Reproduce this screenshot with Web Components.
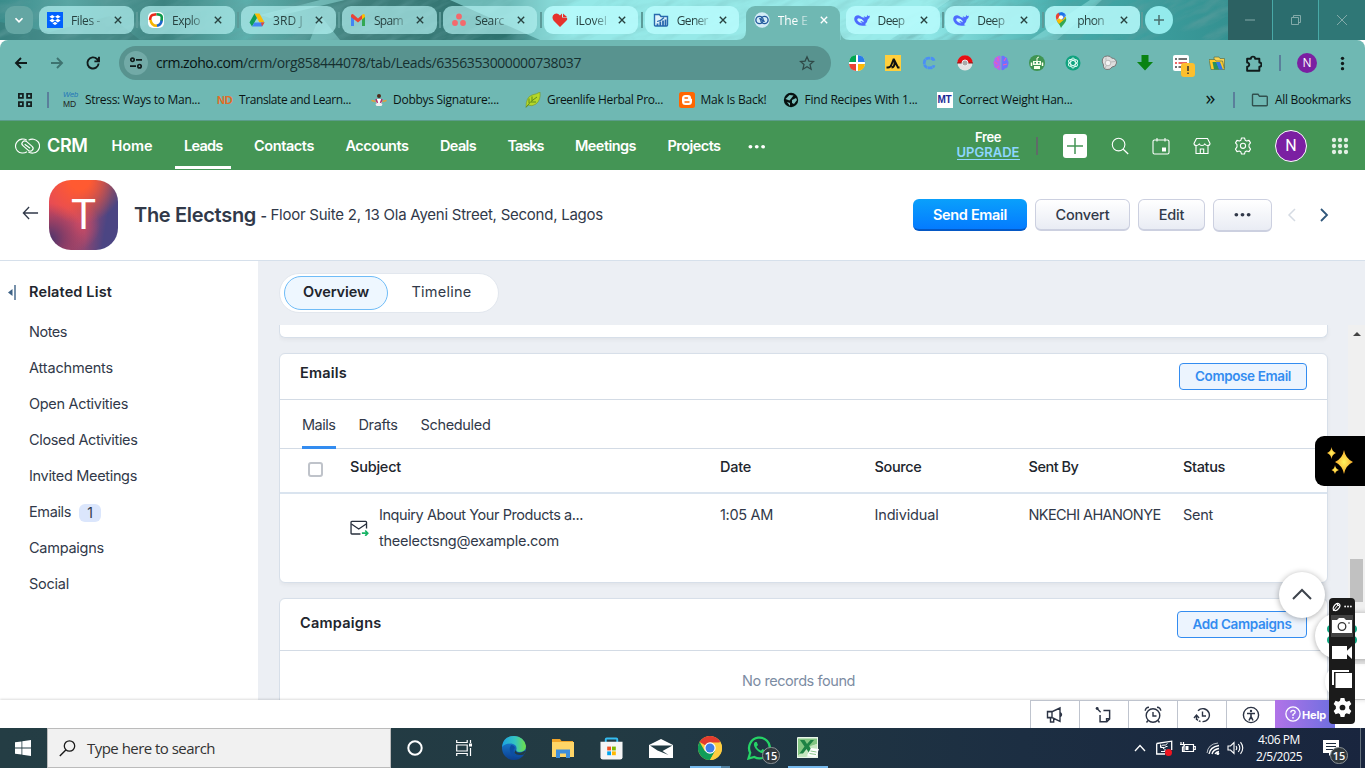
<!DOCTYPE html>
<html lang="en">
<head>
<meta charset="utf-8">
<title>The Electsng - Zoho CRM</title>
<style>
html,body{margin:0;height:768px;overflow:hidden}
body{width:1365px;font-family:Inter,Roboto,"Liberation Sans",sans-serif;font-size:14.5px;color:#313949;background:#fff}
</style>
</head>
<body>
<desktop-screen></desktop-screen>
<script>
const ICONS = {
  chev:['0 0 16 16','<path d="M4 6l4 4 4-4" fill="none" stroke="#fff" stroke-width="2"/>'],
  close:['0 0 10 10','<path d="M1 1l8 8M9 1l-8 8" stroke="currentColor" stroke-width="1.7"/>'],
  dropbox:['0 0 16 16','<path fill="#0061fe" d="M0 0h16v16H0z"/><path fill="#fff" d="M5.2 3L8 4.800 5.200 6.600 2.400 4.800zM10.800 3l2.800 1.800-2.800 1.800L8 4.800zM5.200 6.800L8 8.600l-2.800 1.800-2.800-1.800zM10.800 6.800l2.800 1.800-2.800 1.800L8 8.600zM8 9.800l2.500 1.700L8 13l-2.500-1.500z"/>'],
  explo:['0 0 16 16','<rect width="16" height="16" rx="5" fill="#fff"/><path d="M8.500 2.300L4.500 3Q2.500 3.500 2 8" fill="none" stroke="#e8291c" stroke-width="2.600"/><path d="M8.500 2.200q5 0 5.300 3L13.600 9" fill="none" stroke="#0d9a4b" stroke-width="2.600"/><path d="M13.700 8.500Q13 13.500 8.500 13.700" fill="none" stroke="#1c66c9" stroke-width="2.600"/><path d="M9 13.800Q3.500 14 2.500 8" fill="none" stroke="#f6b400" stroke-width="2.600"/>'],
  drive:['0 0 16 16','<path fill="#fbbc04" d="M5.500 1.500h5l5 9h-5z"/><path fill="#0f9d58" d="M5.500 1.500L8 6 3 14.500.500 10.500z"/><path fill="#4285f4" d="M5.500 10.500h10L13 14.500H3z"/><path fill="#ea4335" d="M12 10.500h3.500L13 14.500z"/>'],
  gmail:['0 0 16 16','<path fill="#4285f4" d="M1 3.500l3 2.500v8H1z"/><path fill="#34a853" d="M12 6l3-2.500V14h-3z"/><path fill="#ea4335" d="M1 3.500Q2 1 4 3l4 3.500L12 3v4L8 10.500 1 5z"/><path fill="#fbbc04" d="M12 3q2-2 3 .500V5l-3 2.500z"/>'],
  asana:['0 0 16 16','<g fill="#f4696c"><circle cx="8" cy="4.500" r="2.900"/><circle cx="4" cy="11" r="2.900"/><circle cx="12" cy="11" r="2.900"/></g>'],
  heart:['0 0 16 16','<path fill="#e5322d" d="M8 15L1.500 8.500Q-1 4 2.500 2q3-1.500 5.500 1.500L10 1.500v4h4.500Q16 7 14.500 8.500z"/><path fill="#e5322d" d="M11 1.500l4 3.500h-4z"/>'],
  bigin:['0 0 16 16','<path d="M1.500 13V2.500h5l1.500 2h6.500V13q0 1-1 1h-11q-1 0-1-1z" fill="#dff3fa" stroke="#2669ad" stroke-width="1.400"/><path d="M4.500 14v-2.500M7.300 14v-4.500M10 14V8.500M12.500 14V7.500" stroke="#2669ad" stroke-width="1.800"/><path d="M4 9.500Q8 9 11 5.500" fill="none" stroke="#2669ad" stroke-width="1.200"/>'],
  zcrm:['0 0 24 16','<g fill="none" stroke="currentColor" stroke-width="1.100"><path d="M11.500 13.800A7 7 0 1 1 11.300 2.200M13 2.100A7 7 0 1 1 12.700 13.900"/><rect x="5.800" y="5.300" width="12.400" height="5.400" rx="2.700" transform="rotate(42 12 8)"/><path d="M9.300 6.200l5.200 4"/></g>'],
  zoho:['0 0 24 24','<circle cx="12" cy="12" r="11.500" fill="#d3ecf7"/><g fill="none" stroke="#21599c" stroke-width="2"><circle cx="8.300" cy="12" r="5.500"/><circle cx="15.700" cy="12" r="5.500"/><path d="M8 9.500l8 5"/></g>'],
  deep:['0 0 16 16','<path fill="#4d6bfe" d="M.200 7Q.300 3.200 4.300 3.200q2 .3 3.700 2Q10 5.200 10.500 6.500L9.800 4q1.500 1.200 2.900.8.500-1.500 1-2l.3 1.200 2-.2q-.300 2.700-2.300 3.700Q13.500 10.500 11 12.300l1.500.9Q6 15 2.300 11.500.100 9.500.200 7z"/><path fill="#c7fbfc" d="M4.500 6.200Q2.800 6.600 3.300 8.300q1.500 2.700 5 3.200L6.300 8.900l2 .300L9 10.500l.8-1.200Q8 6.400 4.500 6.200z"/>'],
  maps:['0 0 16 16','<path fill="#34a853" d="M8 16Q7 13 4 9.500l8-5q3 3-1 7.500Q9 14 8 16z"/><path fill="#fbbc04" d="M3.500 8.500l7-6L13 6 6 12z"/><path fill="#4285f4" d="M8 .200Q12 .500 13 3.500L9.500 8 6 4z"/><path fill="#ea4335" d="M4 9Q1 3 5.500.800L8 3 3.500 8.500z"/><path fill="#1a73e8" d="M5.500.800Q9-1 12 2L8 6z"/><circle cx="8" cy="5.300" r="2.100" fill="#fff"/>'],
  plus:['0 0 12 12','<path d="M6 1v10M1 6h10" stroke="#4b706e" stroke-width="1.500"/>'],
  min:['0 0 10 10','<path d="M0 5h10" stroke="#83aaa9"/>'],
  restore:['0 0 10 10','<path d="M.500 2.500h7v7h-7zM2.500 2.500v-2h7v7h-2" fill="none" stroke="#83aaa9"/>'],
  wclose:['0 0 10 10','<path d="M0 0l10 10M10 0L0 10" stroke="#83aaa9"/>'],
  back:['0 0 16 16','<path d="M14 8H3M8 3L3 8l5 5" fill="none" stroke="currentColor" stroke-width="1.900"/>'],
  fwd:['0 0 16 16','<path d="M2 8h11M8 3l5 5-5 5" fill="none" stroke="currentColor" stroke-width="1.900"/>'],
  reload:['0 0 16 16','<path d="M13.600 8.500A5.600 5.600 0 1 1 12 4L14 6.200M14 1.800v4.600H9.400" fill="none" stroke="#101b1b" stroke-width="1.900"/>'],
  tune:['0 0 14 14','<g fill="none" stroke="#101b1b" stroke-width="1.700"><circle cx="3.500" cy="3.800" r="1.700"/><path d="M7 3.800h6M1 10.200h6"/><circle cx="10.500" cy="10.200" r="1.700"/></g>'],
  star:['0 0 16 16','<path d="M8 1.800l1.900 4.300 4.600.4-3.500 3.100 1.100 4.600L8 11.800l-4.100 2.400L5 9.600 1.500 6.500l4.600-.4z" fill="none" stroke="#2f4a48" stroke-width="1.300"/>'],
  ext1:['0 0 16 16','<circle cx="8" cy="8" r="8" fill="#fff"/><path fill="#00a651" d="M7 0v7H0A8 8 0 0 1 7 0z"/><path fill="#2b7de9" d="M9 0v7h7A8 8 0 0 0 9 0z"/><path fill="#ea4335" d="M7 16V9H0a8 8 0 0 0 7 7z"/><path fill="#fbb905" d="M9 16V9h7a8 8 0 0 1-7 7z"/>'],
  ext2:['0 0 16 16','<path fill="#ffcf3c" d="M0 0h16v16H0z"/><path d="M1.500 12.500h1.500q2.500 0 3.500-3l2-5h.5l4 8h1.500M6.500 12.500Q10 12 9.500 7" stroke="#111" stroke-width="1.900" fill="none"/>'],
  ext3:['0 0 16 16','<path d="M13 5.800Q12.500 3.200 9 3.200H7.500Q3.300 3.500 3.300 8t4.200 4.800H9q3.500 0 4-2.600" stroke="#4b8ff5" stroke-width="2.800" fill="none" stroke-dasharray="4.500 .5"/>'],
  ext4:['0 0 16 16','<circle cx="8" cy="8" r="7.500" fill="#e4e4e4"/><path d="M.300 8a7.700 7.700 0 0 1 15.400 0z" fill="#e60f13"/><path d="M0 8h16" stroke="#7a2222" stroke-width="1"/><circle cx="8" cy="8" r="3" fill="#aaa" stroke="#eee"/>'],
  ext5:['0 0 16 16','<path fill="#b366f0" d="M7.500 1Q5 0 4 2 1 2.500 1.500 5-.500 7.500 1 10q0 3 3 3.500 2 3 3.500 1z"/><path fill="#6c71ff" d="M8.500 1Q11 0 12 2q3 .500 2.500 3 2 2.500.500 5 0 3-3 3.500-2 3-3.500 1z"/><path d="M4 2q2 2 1 4M1.500 7l3 2M13 3l-2 3M14 9l-4 1M4 13l2-2" stroke="#ff5aa5" fill="none"/>'],
  ext6:['0 0 16 16','<circle cx="8" cy="8" r="8" fill="#3f9452"/><path d="M4 6h8v4H4zM5 11h6v3H5z" fill="#f6ffe9"/><path d="M8 6V3l2-1" stroke="#f6ffe9" fill="none"/><path d="M5.500 7h1.500v1.500H5.500zM9 7h1.500v1.500H9z" fill="#285"/><path d="M2.500 7.500v3.500M13.500 7.500v3.500" stroke="#ffe" stroke-width="1.500"/>'],
  ext7:['0 0 16 16','<circle cx="8" cy="8" r="7.500" fill="#10a37f"/><g fill="none" stroke="#e8fff8" stroke-width=".9"><ellipse cx="8" cy="8" rx="2.400" ry="5"/><ellipse cx="8" cy="8" rx="2.400" ry="5" transform="rotate(60 8 8)"/><ellipse cx="8" cy="8" rx="2.400" ry="5" transform="rotate(120 8 8)"/></g>'],
  ext8:['0 0 16 16','<path d="M1.500 4q1.500-3.500 5-3 3-.3 4 2 5 .5 5 5-.500 4-4.500 4-1.500 3-5 2.500-4-.500-3.500-4.500-2-3-1-6z" fill="#dedede" stroke="#777"/><circle cx="7" cy="8" r="2.800" fill="#f4f4f4" stroke="#bbb"/><path d="M5 2.500v3M4 13l1.500-2.500M10 7l4-.5" stroke="#bbb"/>'],
  ext9:['0 0 16 16','<path d="M4.500 0h7v7H16l-8 8.500L0 7h4.500z" fill="#098312"/>'],
  ext10:['0 0 22 22','<rect width="16" height="16" rx="2" fill="#fff"/><path d="M2 4h2M5.500 4H14M2 12h2M5.500 12H14" stroke="#444" stroke-width="1.700"/><path d="M2 8h2M5.500 8H14" stroke="#e53935" stroke-width="1.700"/><rect x="8" y="8" width="14" height="14" rx="3" fill="#fdbf2d"/><path d="M15 11v5M15 17.500v1.600" stroke="#333" stroke-width="1.500"/>'],
  ext11:['0 0 16 16','<path d="M5 2h5l1 1.500h4.500V13H5z" fill="#fbd24e" stroke="#57704d" stroke-width=".7"/><path d="M0 4.500h6l1 1.500h6.500l2 8.500H2z" fill="#ffca28" stroke="#57704d" stroke-width=".7"/><path d="M3.500 7h4l3 7.500H5z" fill="#28915b"/><path d="M7 7h4l3 7.500h-4z" fill="#3178e5"/>'],
  puzzle:['0 0 16 16','<path d="M2 3.500h3.500a2 2 0 0 1 4 0h4V7a2 2 0 0 1 0 4v3.800H2V11a2 2 0 0 0 0-4z" fill="none" stroke="#101b1b" stroke-width="1.800" stroke-linejoin="round"/>'],
  vdots:['0 0 16 16','<g fill="#101b1b"><circle cx="8" cy="2.500" r="1.800"/><circle cx="8" cy="8" r="1.800"/><circle cx="8" cy="13.500" r="1.800"/></g>'],
  apps:['0 0 16 16','<path d="M1.900 1.900h4v4h-4zM10.100 1.900h4v4h-4zM1.900 10.100h4v4h-4zM10.100 10.100h4v4h-4z" fill="none" stroke="#152020" stroke-width="1.800"/>'],
  dobby:['0 0 16 16','<path d="M.500 8.500l4 1M15.500 8.500l-4 1" stroke="#e0a13c" stroke-width="1.700"/><circle cx="8" cy="4" r="2" fill="#4e2a1a"/><path d="M6 7h4l1 4H5z" fill="#fff"/><path d="M5 7l1.500 4M11 7l-1.500 4" stroke="#b32b6f" stroke-width="1.500"/><path d="M4.500 12q3.500-3 7 0l-1 2H5.500z" fill="#eee"/>'],
  leaf:['0 0 16 16','<path d="M1 15Q1 5 7 3q5-1 8-3 1 8-4 12-4 3-8 1z" fill="#b5d829" stroke="#75942a" stroke-width=".6"/><path d="M1 15.500Q5 9 12 5M4 11V6.500M7 8.500V4.500M6 10h5" fill="none" stroke="#5f8c1a"/>'],
  blogger:['0 0 16 16','<rect width="16" height="16" rx="2.500" fill="#ff6600"/><path d="M6.500 3h2.500q3 0 3 3 0 1 1 1v2.500q0 3.500-3.500 3.500h-3Q3 13 3 9.500v-3Q3 3 6.500 3z" fill="#fff"/><path d="M6 6h2.500M6 10h4" stroke="#ff6600" stroke-width="1.400" stroke-linecap="round"/>'],
  globe:['0 0 16 16','<circle cx="8" cy="8" r="7.200" fill="#06100f"/><path d="M2.500 7l4-4 4 .500-2 2.500-2 2.500zM9 8l4-2 1 2-3 4-2-1zM4 10l3 1v3z" fill="#79bdb9"/>'],
  folder:['0 0 18 16','<path d="M1.500 13V3q0-.7.7-.7H7l1.500 2h7q.8 0 .8.800V13q0 .7-.8.700H2.200q-.7 0-.7-.7z" fill="none" stroke="#31514f" stroke-width="1.400"/>'],
  search:['0 0 18 18','<circle cx="7.600" cy="7.600" r="6.300" fill="none" stroke="#fff" stroke-width="1.100"/><path d="M12.200 12.200l5 4.800" stroke="#fff" stroke-width="1.200"/>'],
  cal:['0 0 18 18','<rect x="1" y="3" width="16" height="14" rx="1.500" fill="none" stroke="#fff" stroke-width="1.100"/><path d="M5 1v3.500M13 1v3.500" stroke="#fff" stroke-width="1.100"/><path d="M10 10.500h4v4h-4z" fill="#fff"/>'],
  store:['0 0 18 18','<path d="M3.500 1.500h11l2.500 5q0 2-2.500 2-1.800 0-2.700-1.500Q11 8.500 9 8.500T6.200 7Q5 8.500 3.500 8.500 1 8.500 1 6.500zM3 8.500v8h12v-8M7.300 16.500V12h3.400v4.500" fill="none" stroke="#fff" stroke-width="1.100"/>'],
  gear:['0 0 18 18','<path d="M7.500 1h3l.7 2.200 1.500.8 2.300-.6 1.500 2.500L15 7.600v2.300l1.500 2.200-1.500 2.500-2.400-.6-1.500.8-.6 2.200h-3l-.7-2.200-1.500-.8-2.300.6-1.500-2.500L3 9.900V7.600L1.500 5.900 3 3.400l2.400.6 1.500-.8z" fill="none" stroke="#fff" stroke-width="1.100" stroke-linejoin="round"/><circle cx="9" cy="8.800" r="2.600" fill="none" stroke="#fff" stroke-width="1.100"/>'],
  grid9:['0 0 18 18','<g fill="#e2efe4">'+[2.500,8.500,14.500].map(y=>[2.500,8.500,14.500].map(x=>`<circle cx="${x+.5}" cy="${y+.5}" r="2.150"/>`).join('')).join('')+'</g>'],
  bigplus:['0 0 24 24','<rect width="24" height="24" rx="3" fill="#fff"/><path d="M12 4v16M4 12h16" stroke="#449555" stroke-width="1.500"/>'],
  longback:['0 0 18 14','<path d="M17 7H1.500M7.500 1L1.500 7l6 6" fill="none" stroke="#313949" stroke-width="1.400"/>'],
  dots:['0 0 18 6','<g fill="currentColor"><circle cx="2.500" cy="3" r="2"/><circle cx="9" cy="3" r="2"/><circle cx="15.500" cy="3" r="2"/></g>'],
  left:['0 0 10 14','<path d="M8 1L2 7l6 6" fill="none" stroke="#d5dbe3" stroke-width="1.500"/>'],
  right:['0 0 10 14','<path d="M2 1l6 6-6 6" fill="none" stroke="#2f567a" stroke-width="1.800"/>'],
  collapse:['0 0 8 15','<path d="M0 7.500L4.500 4v7z" fill="#3d6286"/><path d="M7 0v15" stroke="#3d6286" stroke-width="1.400"/>'],
  mail:['0 0 20 16','<path d="M11 14H2q-.9 0-.9-.9V2.300q0-.9.900-.9h14.500q.9 0 .9.900v6.200" fill="none" stroke="#272f3d" stroke-width="1.400"/><path d="M1.500 4l7.700 5L17 4" fill="none" stroke="#272f3d" stroke-width="1.400"/><path d="M12.500 13.200h6M16 10.500l2.700 2.700-2.700 2.700" fill="none" stroke="#16b364" stroke-width="1.700"/>'],
  spark:['0 0 26 27','<defs><radialGradient id="g"><stop offset="0" stop-color="#fff45e"/><stop offset="1" stop-color="#f7a928"/></radialGradient></defs><g fill="url(#g)"><path d="M17 3q1.500 8.500 9 12-7.500 3.500-9 12-1.500-8.500-9-12 7.500-3.500 9-12z"/><path d="M4.500 0Q5 4.500 9 6 5 7.500 4.500 12 4 7.500 0 6 4 4.500 4.500 0z"/><path d="M8 18q.500 4 4 5-3.500 1-4 4-.500-3-3.500-4Q7.500 22 8 18z"/></g>'],
  up:['0 0 20 12','<path d="M1 11l9-9 9 9" fill="none" stroke="#3d434c" stroke-width="2"/>'],
  horn:['0 0 18 16','<path d="M1.500 5H6l8-3.300v12L6 10.300H1.500zM6 5v5.300M4.500 10.500v3.700h3.200V11M14.200 6q2.600 1.700 0 3.500" fill="none" stroke="#2b3344" stroke-width="1.400"/>'],
  note:['0 0 16 16','<path d="M7.500 4H13v7.500L10.500 14H4.500V8M13 11.300h-2.700V14" fill="none" stroke="#2b3344" stroke-width="1.300"/><path d="M2 2.500l3 3" fill="none" stroke="#2b3344" stroke-width="1.200"/><circle cx="1.900" cy="2.200" r="1.300" fill="#2b3344"/>'],
  alarm:['0 0 18 18','<circle cx="9" cy="9.500" r="6.800" fill="none" stroke="#2b3344" stroke-width="1.400"/><path d="M9 6v4h3.500M1.200 4.800Q1.500 1.500 5 1.300M16.800 4.800Q16.500 1.500 13 1.300M4 14.500L2.500 16.500M14 14.500l1.500 2" fill="none" stroke="#2b3344" stroke-width="1.400"/>'],
  hist:['0 0 18 18','<path d="M5 4.800A6.500 6.500 0 1 1 9.500 15.600M9.500 5.500V10H13M3.500 14V9.500M1 12l2.500-3L6 12" fill="none" stroke="#2b3344" stroke-width="1.400"/><path d="M3.500 13q1.500 2 4 2.500" fill="none" stroke="#2b3344" stroke-width="1.400" stroke-dasharray="2 1"/>'],
  access:['0 0 18 18','<circle cx="9" cy="9" r="7.600" fill="none" stroke="#2b3344" stroke-width="1.400"/><circle cx="9" cy="5" r="1.200" fill="#2b3344"/><path d="M5 7.500h8M9 7.500v3l-2 4M9 10.500l2 4" stroke="#2b3344" stroke-width="1.600" fill="none"/>'],
  help:['0 0 16 16','<circle cx="8" cy="8" r="7.100" fill="none" stroke="#fff" stroke-width="1.300"/><path d="M5.800 6.500Q5.800 4.300 8 4.300t2.200 2Q10.200 7.500 8 8.500V10" fill="none" stroke="#fff" stroke-width="1.300"/><circle cx="8" cy="11.800" r=".9" fill="#fff"/>'],
  win:['0 0 16 16','<path fill="#fff" d="M0 2.300L6.500 1.400v6.200H0zM7.300 1.300L16 0v7.600H7.300zM0 8.400h6.500v6.200L0 13.700zM7.300 8.400H16V16l-8.700-1.200z"/>'],
  tsearch:['0 0 17 17','<circle cx="10.500" cy="6" r="5.200" fill="none" stroke="#1a1a1a" stroke-width="1.300"/><path d="M6.800 10L.800 16" stroke="#1a1a1a" stroke-width="1.400"/>'],
  cortana:['0 0 16 16','<circle cx="8" cy="8" r="6.700" fill="none" stroke="#fff" stroke-width="2"/>'],
  taskv:['0 0 16 16','<path d="M.700 0v2.500h10.500V0M.700 16v-2.500h10.500V16M.700 5h10.500v6H.700z" fill="none" stroke="#fff" stroke-width="1.200"/><path d="M14.500 0v3M14.500 8v8" stroke="#fff" stroke-width="1.200"/><path d="M13 3.500h3v3h-3z" fill="#fff"/>'],
  edge:['0 0 24 24','<defs><linearGradient id="e1"><stop offset="0" stop-color="#1ba2e2"/><stop offset=".55" stop-color="#35c5c0"/><stop offset="1" stop-color="#70e044"/></linearGradient><linearGradient id="e2" x2="0" y2="1"><stop offset="0" stop-color="#1b8be0"/><stop offset="1" stop-color="#0c3f8f"/></linearGradient></defs><circle cx="12" cy="12" r="12" fill="url(#e2)"/><path d="M0 11Q1 0 12 0q10 .500 12 10 0 6-7 6-3.500 0-2.500-3 .500-4.500-5-5.500Q3 7.500 0 11z" fill="url(#e1)"/><path d="M9 9q-3 5 1 10 5 4 11 .500Q13 21 11.500 16q-.500-3 1.500-4-1-3-4-3z" fill="#0d4ea3"/><path d="M13.500 14q.5 3 4.500 3l6-2.500-2 4Q15 20 12.500 17z" fill="#223a45"/>'],
  expl:['0 0 22 19','<path d="M0 0h8l1.500 2H21v15H0z" fill="#f2a529"/><path d="M0 3h22v15H0z" fill="#ffd567"/><path d="M4 19v-8.500h14V19h-4v-4.500H8V19z" fill="#3e8edb"/>'],
  msstore:['0 0 24 24','<path d="M6 6V2.500Q6 1.500 7 1.500h10q1 0 1 1V6" fill="none" stroke="#35bdf2" stroke-width="2"/><path d="M.500 5h23v16q0 2.500-2.500 2.500H3Q.500 23.500.500 21z" fill="#f5f5f5"/><path fill="#f25022" d="M7.500 10h4v4h-4z"/><path fill="#7fba00" d="M12.500 10h4v4h-4z"/><path fill="#00a4ef" d="M7.500 15h4v4h-4z"/><path fill="#ffb900" d="M12.500 15h4v4h-4z"/>'],
  wmail:['0 0 24 19','<path d="M0 6L12 0l12 6v13H0z" fill="#fff"/><path d="M1 6.500h22.500L13.500 12l6 4L8.500 11.500z" fill="#223b43"/>'],
  chrome:['0 0 24 24','<circle cx="12" cy="12" r="12" fill="#ffcd40"/><path d="M12 12L1.600 6A12 12 0 0 1 22.400 6z" fill="#e33b2e"/><path d="M12 12L6.800 15 1.600 6A12 12 0 0 0 12 24l5.200-9z" fill="#109d58"/><path d="M12 6.500h10.700A12 12 0 0 1 12 24l5-9z" fill="#ffcd40"/><circle cx="12" cy="12" r="5.700" fill="#fff"/><circle cx="12" cy="12" r="4.500" fill="#3f7de8"/>'],
  whats:['0 0 24 24','<path d="M1.500 22.500l1.700-5.800A10.400 10.400 0 1 1 7.300 21z" fill="none" stroke="#25d366" stroke-width="2.300"/><path d="M8 6q-2.500 2.500.500 6.500t7.500 5q2.500-.5 2.500-3l-3-1.500-1.500 1.700q-3-1-4.500-4L11 9 9.700 6z" fill="#25d366"/>'],
  excel:['0 0 22 22','<path d="M0 1q0-1 1-1h20v21H0z" fill="#e9f6e9"/><path d="M1 1.500h19V7Q10 10 1 19z" fill="#82c582"/><path d="M1 19Q10 9 20 7v7L9 20H1z" fill="#c5e6c0"/><path d="M3 3h4.500L10 7l3.500-4H17l-5 6 5 7.500h-4.500L9.500 12 6 16.500H2.500l5-7z" fill="#1d8244"/><path d="M14 11l8 1-3 8-9-1.500z" fill="#fff"/><path d="M13.500 14l6 1M12.500 16.500l6.500 1" stroke="#8cc78c"/>'],
  tup:['0 0 12 8','<path d="M1 7l5-5.500L11 7" fill="none" stroke="#fff" stroke-width="1.300"/>'],
  tsync:['0 0 17 16','<path d="M.700 3.500l15-2.300V10M.700 3.500v10.500H9" fill="none" stroke="#fff" stroke-width="1.300"/><path d="M4.500 7q1-2.500 5-2l2-1.500M5 11.500h4V9M4.500 4.500V7.500H8M7 9l3-2.500h1.500" fill="none" stroke="#fff"/><circle cx="12.500" cy="12.500" r="3.500" fill="#f01520"/>'],
  bat:['0 0 17 14','<path d="M5 3.500h9.500v7H5zM14.500 5.500h1.800v3h-1.800M2 1v2.500M4.500 1v2.500M1 3.500h4.500Q5.500 6 3.500 6V10.500H6" fill="none" stroke="#fff" stroke-width="1.200"/><path d="M6.500 5h3v4h-3z" fill="#fff"/>'],
  wifi:['0 0 14 14','<g fill="none" stroke="#fff"><path d="M1 12Q2 3 12 2" opacity=".7"/><path d="M3 13Q4 6 13 4.500M6 13q1-4.500 7-5.500M9 13q1-2 4-2.500" stroke-width="1.300"/></g><circle cx="11.800" cy="12.500" r="1.500" fill="#fff"/>'],
  vol:['0 0 17 14','<path d="M1 5h2.500L7 1.500v11L3.500 9H1zM9 5q1.500 2 0 4M11.300 3q3 4 0 8M13.500 1.200q4.500 5.800 0 11.600" fill="none" stroke="#fff" stroke-width="1.100"/>'],
  notif:['0 0 16 16','<path d="M0 0h16v13H9l-3 3v-3H0z" fill="#fff"/><path d="M3 3.500h10M3 6.500h10M3 9.500h7" stroke="#1c2b3e" stroke-width="1.200"/>'],
  pen:['0 0 9 10','<ellipse cx="4.500" cy="5" rx="2.600" ry="4" transform="rotate(40 4.500 5)" fill="none" stroke="#fff" stroke-width="1.300"/><path d="M1 9l5-6M4 1l4 4" stroke="#fff"/>'],
  cam:['0 0 20 16','<path d="M0 2h5l2-2h5l2 2h6v13H0z" fill="#fff"/><circle cx="10" cy="8.500" r="3.800" fill="#fff" stroke="#333" stroke-width="1.300"/><circle cx="17" cy="5" r=".8" fill="#333"/>'],
  video:['0 0 20 14','<path d="M0 0h15v5L20 0v14l-5-5V14H0z" fill="#fff"/>'],
  shots:['0 0 20 18','<path d="M0 0h17v2H2v13H0z" fill="#fff"/><path d="M3.500 3H20v15H3.500z" fill="#fff"/>'],
  cog:['0 0 20 20','<path d="M8 0h4l.7 3 1.600.9 3-1 2 3.500L17 8.600v2.800l2.300 2.200-2 3.500-3-1-1.600.9L12 20H8l-.7-3-1.600-.9-3 1-2-3.500L3 11.400V8.600L.700 6.400l2-3.500 3 1L7.300 3z" fill="#fff"/><circle cx="10" cy="10" r="3" fill="#1b1b1b"/>']
};
const el=(name,css,html)=>customElements.define(name,class extends HTMLElement{
  constructor(){super();this.attachShadow({mode:'open'})}
  connectedCallback(){this.shadowRoot.innerHTML=`<style>:host{display:block;box-sizing:border-box}*{box-sizing:border-box}${css}</style>`+(typeof html==='function'?html(this):html)}
});
const ic=(n,w,h=w,x='')=>`<ui-icon name="${n}" w="${w}" h="${h}" style="${x}"></ui-icon>`;
const tx=(s,w,x='')=>`<fit-text w="${w}" style="${x}">${s}</fit-text>`;

el('ui-icon',':host{display:block;flex:none}svg{display:block}',e=>{
  const [v,p]=ICONS[e.getAttribute('name')];
  return `<svg width="${e.getAttribute('w')}" height="${e.getAttribute('h')}" viewBox="${v}" preserveAspectRatio="none">${p}</svg>`});

/* One-line label that tracks its letters to fill a given width. */
customElements.define('fit-text',class extends HTMLElement{
  constructor(){super();this.attachShadow({mode:'open'}).innerHTML='<style>:host{display:block;flex:none;white-space:pre}span{display:inline-block}</style><span><slot></slot></span>'}
  connectedCallback(){
    const w=+this.getAttribute('w'),s=this.shadowRoot.querySelector('span');
    this.style.width=w+'px';
    const n=this.textContent.length,m=s.getBoundingClientRect().width;
    if(m&&n>1)s.style.letterSpacing=((w-m)/n).toFixed(3)+'px';
  }
});

el('browser-tab',`:host{width:94.600px;height:28px;border-radius:9px;background:var(--pill,#a3e3e2);color:#27413f;display:flex;align-items:center;padding-left:8px;font:12px "Open Sans",sans-serif;flex:none}
:host([active]){background:#6fb8b3;color:#fff;height:34px;border-radius:9px 9px 0 0;align-self:flex-start;padding-bottom:6px}
.t{width:34px;margin-left:8px;-webkit-mask:linear-gradient(90deg,#000 50%,#0003 95%);mask:linear-gradient(90deg,#000 50%,#0003 95%)}ui-icon+ .t+ui-icon{margin-left:8.500px}`,
e=>ic(e.getAttribute('icon'),16)+`<div class="t">${tx(e.getAttribute('label'),e.getAttribute('tw'))}</div>`+ic('close',8));

el('tab-strip',`:host{height:40px;position:relative;overflow:hidden}
.bg{position:absolute;inset:0}.row{position:relative;display:flex;height:40px;padding:6px 0 0 5px}
.c{width:28px;height:28px;border-radius:9px;background:#64a6a3;display:grid;place-items:center;margin-right:6px}
i{width:2px;height:16px;background:#5c9b99;margin:6px 2.200px 0;flex:none}i.n{background:none}
.p{width:28px;height:28px;border-radius:14px;background:#93ebec;display:grid;place-items:center;margin-left:0}
.w{display:flex;margin:-6px 0 0 auto}.w div{width:45px;height:40px;background:#2c6162;display:grid;place-items:center;border-right:1px solid #49a9a7}.w div:last-child{width:46px;background:#2f7776;border:0}.w div:nth-child(2){width:46px;background:#2b6d6e}`,
()=>{const D='rgba(180,242,241,.68)',L='rgba(185,252,253,.85)';
const T=[['dropbox','Files -',29,D],['explo','Explo',28,D],['drive','3RD J',30,D],['gmail','Spam',29,D],['asana','Searc',29,D],['heart','iLoveI',31,L],['bigin','Gener',31,L],['zoho','The E',30,'a'],['deep','Deep',27,L],['deep','Deep',27,L],['maps','phon',27,L]];
return `<svg class="bg" width="1365" height="40"><defs><linearGradient id="b"><stop offset="0" stop-color="#3a8c8b"/><stop offset=".05" stop-color="#5aa6a4"/><stop offset=".12" stop-color="#3d8380"/><stop offset=".18" stop-color="#5cb0ad"/><stop offset=".26" stop-color="#417f7c"/><stop offset=".37" stop-color="#2c716e"/><stop offset=".42" stop-color="#86dddd"/><stop offset=".6" stop-color="#94e3e2"/><stop offset=".68" stop-color="#8ee6e6"/><stop offset=".78" stop-color="#44aaa9"/><stop offset="1" stop-color="#277c7d"/></linearGradient><filter id="n" x="0" y="0" width="100%" height="100%"><feTurbulence type="fractalNoise" baseFrequency=".03 .12" numOctaves="4" seed="11"/><feColorMatrix values="0 0 0 0 .12  0 0 0 0 .34  0 0 0 0 .34  2.600 0 0 0 -1.1"/></filter></defs><path fill="url(#b)" d="M0 0h1365v40H0z"/><path d="M270 18l75-18h-25l-60 15zM310 40l10-25 20 25zM880 0h60l-80 40h-60zM1030 40l60-40h12l-45 40z" fill="#9ee9e6" opacity=".45"/><path d="M0 40V22l50 10 60-16 30 24z" fill="#377371" opacity=".45"/><g transform="rotate(-24 680 20) scale(1.15)"><rect x="-100" y="-320" width="1500" height="660" filter="url(#n)" opacity=".5"/></g><path d="M450 0h500l-60 40H540z" fill="#9ff0ee" opacity=".55"/><path d="M736.500 40q9.500 0 9.500-9.500V40zM840.500 30.500q0 9.500 9.500 9.500h-9.500z" fill="#6fb8b3"/></svg>
<div class="row"><div class="c">${ic('chev',14)}</div>${T.map((t,i)=>`<browser-tab icon="${t[0]}" label="${t[1]}" tw="${t[2]}" ${t[3]==='a'?'active':`style="--pill:${t[3]}"`}></browser-tab><i class="${i==6||i==7?'n':''}" style="${i>6?'margin-left:1.600px;margin-right:1.600px':''}"></i>`).join('')}<div class="p">${ic('plus',12)}</div><div class="w"><div>${ic('min',10)}</div><div>${ic('restore',10)}</div><div>${ic('wclose',10)}</div></div></div>`});

el('address-bar',`:host{background:#6fb8b3;height:40px;border-radius:8px 8px 0 0;padding-top:6px;font:14px "Open Sans",sans-serif;color:#16302f;position:relative}
.r{display:flex;align-items:center;height:34px}
.o{display:flex;align-items:center;width:712px;height:34px;border-radius:17px;background:#58938f;margin-left:18px;padding:0 16px 0 5px}
.o fit-text{margin-top:-1px}
.s{width:24px;height:24px;border-radius:12px;background:#72aaa7;display:grid;place-items:center;margin-right:8px}
.e{display:flex;margin-left:18px;gap:20px;align-items:center}
.v{width:2px;height:16px;background:#5a7f9b;margin:0 16px 0 17px}.a{width:20px;height:20px;border-radius:10px;background:#7b1fa2;color:#fff;font-size:12px;line-height:20px;text-align:center}`,
()=>`<div class="r">${ic('back',16,16,'margin-left:13px;color:#101b1b')}${ic('fwd',16,16,'margin-left:20px;color:#3e7370')}${ic('reload',16,16,'margin-left:20px')}<div class="o"><div class="s">${ic('tune',14)}</div>${tx('crm.zoho.com',87,'color:#061212')}${tx('/crm/org858444078/tab/Leads/6356353000000738037',338)}${ic('star',16,16,'margin-left:auto')}</div>
<div class="e">${[1,2,3,4,5,6,7,8,9].map(i=>ic('ext'+i,16)).join('')}${ic('ext10',22,22,'margin:6px -6px 0 0')}${ic('ext11',16)}${ic('puzzle',17)}</div><div class="v"></div><div class="a">N</div>${ic('vdots',15,15,'margin-left:18px')}</div>`);

el('bookmark-bar',`:host{background:#6fb8b3;height:41px;display:flex;align-items:center;font:12px "Open Sans",sans-serif;color:#0a1514;border-bottom:1px solid #5a9c8a}
i{width:2px;height:16px;background:#5a7f9b;flex:none}.b{display:flex;align-items:center;gap:6px;position:relative}.b>fit-text{margin-top:-1px}.wm{width:16px;font:italic 7.500px/9px "Liberation Sans";color:#2477b8}.wm b{display:block;font:8.500px/11px "Liberation Sans";color:#222;margin-top:-1px;padding-top:1px}.nd{font:700 11px "Liberation Sans";color:#e46b25;width:16px;letter-spacing:-.3px}.mt{width:16px;height:16px;background:#fff;color:#1b2b96;font:800 10px/16px "Liberation Sans";text-align:center;letter-spacing:-.3px}`,
()=>{const B=(i,s,w,m)=>`<div class="b" style="margin-left:${m}px">${i}${tx(s,w)}</div>`;
return ic('apps',16,16,'margin-left:17px')+'<i style="margin-left:13.500px"></i>'+B('<div class="wm">Web<b>MD</b></div>','Stress: Ways to Man...',115,14.5)+B('<div class="nd">ND</div>','Translate and Learn...',112,17)+B(ic('dobby',16),'Dobbys Signature:...',106,20)+B(ic('leaf',16),'Greenlife Herbal Pro...',116,26)+B(ic('blogger',16),'Mak Is Back!',66,15.5)+B(ic('globe',16),'Find Recipes With 1...',113,16)+B('<div class="mt">MT</div>','Correct Weight Han...',114,19)+`<div style="margin-left:133px;font-size:20px;line-height:16px;padding-bottom:5px">»</div><i style="margin-left:18px"></i>`+B(ic('folder',18,16),'All Bookmarks',76,15.5)});

el('crm-nav',`:host{background:#449555;height:49px;display:flex;align-items:center;color:#fff;font-weight:600;font-size:14.500px}
.m{display:flex;gap:13.500px;margin-left:15px;height:49px}.m div{padding:0 9px 1px;display:flex;align-items:center;position:relative;border-bottom:4px solid transparent;border-top:4px solid transparent}.m .on{border-bottom:3px solid #fff;height:48px;padding:0 8px 1px 9px;margin-right:1px}
.f{margin-left:191.500px;display:flex;flex-direction:column;align-items:center;font-size:13px;line-height:15px;margin-top:-2px}
.l{width:2px;height:18px;background:#5f6b68;margin-left:16px}.a{width:32px;height:32px;border:1px solid #fff;border-radius:50%;background:#7b1fa2;font:400 16px/30px Roboto;text-align:center;margin-left:23px}`,
()=>ic('zcrm',25,16,'margin-left:15px')+tx('CRM',40.5,'font-size:18px;margin-left:7px')+`<div class="m">${[['Home',41],['Leads',38.5],['Contacts',60],['Accounts',63],['Deals',36],['Tasks',36],['Meetings',61],['Projects',53]].map((m,i)=>`<div class="${i==1?'on':''}">${tx(m[0],m[1])}</div>`).join('')}</div>`+ic('dots',17.5,5.5,'margin-left:18px;margin-top:2px')+`<div class="f">${tx('Free',26)}${tx('UPGRADE',63,'color:#8fd6ff;border-bottom:1px solid #8fd6ff;line-height:14px')}</div><div class="l"></div>`+ic('bigplus',24,24,'margin-left:25px')+ic('search',18,18,'margin-left:24.500px')+ic('cal',18,18,'margin-left:23px')+ic('store',18,18,'margin-left:23px')+ic('gear',18,18,'margin-left:23px')+`<div class="a">N</div>`+ic('grid9',18,18,'margin-left:24px'));

el('crm-button',`:host{height:32px;border:1px solid #ccd0e0;border-bottom-width:2px;border-radius:6px;background:linear-gradient(#fff,#e9ecf4);display:flex;align-items:center;justify-content:center;color:#313949;font-weight:500;font-size:14.500px;flex:none}
:host([primary]){border:0;border-bottom:2px solid #0558c5;background:linear-gradient(#0aa0fb,#047bff);color:#fff;font-weight:600}`,'<slot></slot>');

el('record-header',`:host{height:91px;display:flex;align-items:center;border-bottom:1px solid #d6e0eb;position:relative;background:#fff}
.av{width:69px;height:70px;border-radius:22px;margin:0 16px 0 10px;color:#fff;font:400 42px/70px Roboto;text-align:center;background:radial-gradient(circle at 45% 0,#ff5a31 12%,transparent 55%),radial-gradient(circle at 0 85%,#5c376b 5%,transparent 40%),radial-gradient(circle at 38% 65%,#d54c63,transparent 40%),linear-gradient(100deg,#e2495b 30%,#4b4583 80%)}
.b{margin-left:auto;display:flex;gap:8px;align-items:center;padding-right:36px}`,
()=>ic('longback',17,14,'margin:-4px 0 0 22px')+`<div class="av">T</div>`+tx('The Electsng',122,'font-size:20px;font-weight:600')+tx('-',6,'font-weight:600;font-size:14px;margin-left:4.500px')+tx('Floor Suite 2, 13 Ola Ayeni Street, Second, Lagos',332.5,'margin-left:4px;font-size:15px;margin-top:-1px')+`<div class="b"><crm-button primary style="width:114px">${tx('Send Email',74)}</crm-button><crm-button style="width:95px">${tx('Convert',54)}</crm-button><crm-button style="width:67px">${tx('Edit',25.5)}</crm-button><crm-button style="width:59px;height:33px;margin-bottom:-1px">${ic('dots',17,5.500)}</crm-button>${ic('left',10,14,'margin-left:7px')}${ic('right',10,14,'margin-left:14px')}</div>`);

el('related-list',`:host{width:258px;background:#fff;padding:13px 0 0 8px;flex:none}
.h{display:flex;align-items:center;height:36px;gap:13px;font-weight:600;color:#21252d}.h fit-text{margin-top:-2px}.i{height:36px;margin:3px 0 0 21px;display:flex;align-items:center;gap:8px}.i+.i{margin-top:0}
.n{width:22px;height:18px;border-radius:6px;background:#dbe6fc;text-align:center;font-size:14px;line-height:18px;margin-top:4px}`,
()=>`<div class="h">${ic('collapse',8,15)}${tx('Related List',83)}</div>`+[['Notes',38],['Attachments',84],['Open Activities',99],['Closed Activities',108.5],['Invited Meetings',108],['Emails',42],['Campaigns',75],['Social',40]].map(a=>`<div class="i">${tx(...a)}${a[0]=='Emails'?'<div class="n">1</div>':''}</div>`).join(''));

el('related-card',`:host{border:1px solid #d7dfe9;border-radius:6px;background:#fff;box-shadow:0 2px 4px #0000000c;flex:none}
.h{display:flex;justify-content:space-between;align-items:flex-start;border-bottom:1px solid #d3dbe5;padding:9px 20px 0;font-weight:600;color:#21252d;height:var(--hh,46px)}
.t{line-height:20px}::slotted([slot=action]){flex:none}`,'<div class="h"><div class="t"><slot name="title"></slot></div><slot name="action"></slot></div><slot></slot>');
el('outline-button',`:host{height:27px;border:1px solid #338cf0;border-radius:4px;background:#ecf4fe;color:#338cf0;font-size:13.500px;display:flex;align-items:center;justify-content:center;font-weight:600;padding-bottom:1px}`,'<slot></slot>');
el('mail-table',`:host{font-size:14.500px}.tabs{display:flex;gap:23px;padding-left:22px;height:49px;border-bottom:1px solid #d3dbe5}.tabs div{padding-top:16px;position:relative;height:49px}.tabs .on{border-bottom:3px solid #338cf0;border-radius:2px 2px 0 0}
.g{display:grid;grid-template-columns:70px 370px 154.500px 154px 154.500px 1fr}.hd{height:45px;border-bottom:2px solid #dae4ef;color:#21252d;font-weight:500;padding-top:9px}.cb{width:15px;height:15px;border:2px solid #bfc3ca;border-radius:3px;margin:4px 0 0 28px}
.rw{height:89px;padding-top:12px;line-height:17px}.s{display:flex;gap:10px}.s p{margin:0 0 9px}`,
()=>`<div class="tabs"><div class="on">${tx('Mails',33.5)}</div><div>${tx('Drafts',39)}</div><div>${tx('Scheduled',70)}</div></div><div class="g hd"><div><div class="cb"></div></div>${[['Subject',51],['Date',31],['Source',47],['Sent By',50],['Status',42]].map(a=>tx(...a)).join('')}</div>
<div class="g rw"><span></span><div class="s">${ic('mail',19,16,'margin-top:14px')}<div><p>${tx('Inquiry About Your Products a...',204)}</p><p>${tx('theelectsng@example.com',180)}</p></div></div>${tx('1:05 AM',53)}${tx('Individual',64)}${tx('NKECHI AHANONYE',132)}${tx('Sent',30)}</div>`);

el('crm-content',`:host{flex:1;background:#eceff4;display:flex;flex-direction:column;padding-left:21px;overflow:hidden}
.pill{display:flex;width:220px;height:40px;margin:12px 0 0;border:1px solid #e2e7ee;border-radius:20px;background:#fff;padding:2px 0 0 4px;flex:none}.o{width:104px;height:34px;border:1px solid #6fbcf7;border-radius:17px;background:#eef7ff;display:flex;justify-content:center;align-items:center;font-weight:600;color:#21252d;padding-bottom:3px}.tl{padding:7px 0 0 23.500px}
.sc{display:flex;justify-content:space-between;margin-top:12px;height:375px;overflow:hidden}.c{width:1049px;display:flex;flex-direction:column;gap:15px}.top{height:13px;margin-bottom:0;border:1px solid #d7dfe9;border-top:0;border-radius:0 0 6px 6px;background:#fff;box-shadow:0 2px 4px #0000000c;flex:none}
.bar{width:17px;background:#f0f0f0;display:flex;flex-direction:column;align-items:center}.bar:before{content:"";border:4px solid transparent;border-top:0;border-bottom:4px solid #444;margin-top:7px}.bar:after{content:"";width:13px;height:43px;background:#c1c1c1;margin-top:223px}`,
()=>`<div class="pill"><div class="o">${tx('Overview',66)}</div><div class="tl">${tx('Timeline',60)}</div></div><div class="sc"><div class="c"><div class="top"></div><related-card style="height:230px;margin-top:0px"><span slot="title">${tx('Emails',47)}</span><outline-button slot="action" style="width:128px">${tx('Compose Email',96)}</outline-button><mail-table></mail-table></related-card><related-card style="height:130px;--hh:52px"><span slot="title" style="display:block;padding-top:5px">${tx('Campaigns',81.5)}</span><outline-button slot="action" style="width:130px;margin-top:3px">${tx('Add Campaigns',99)}</outline-button><div style="display:flex;justify-content:center;padding:21px 10px 0 0;font-size:14.500px;color:#7c8ca3">${tx('No records found',113)}</div></related-card></div><div class="bar"></div></div>`);

el('crm-footer',`:host{height:28px;background:#fff;box-shadow:0 -1px 2px #0002;display:flex;justify-content:flex-end;position:relative}
div{width:49px;border:1px solid #bfc4ce;border-right:0;border-bottom:0;display:flex;align-items:center;justify-content:center}.h{width:60px;border:0;background:linear-gradient(90deg,#b173e8,#6d6fe0);color:#fff;font-weight:700;font-size:11px;justify-content:flex-start;padding-left:10px;margin-right:30px}`,
()=>['horn','note','alarm','hist','access'].map(n=>`<div>${ic(n,18)}</div>`).join('')+`<div class="h">${ic('help',16)}${tx('Help',24,'margin:2px 0 0 1px')}</div>`);

el('task-bar',`:host{height:40px;background:linear-gradient(90deg,#243d44,#223a43 45%,#1c2e42 75%,#19253e);display:flex;align-items:center;position:relative;font-family:"Open Sans",sans-serif;color:#fff}
.s{width:344px;height:40px;background:#f1f1f1;border:1px solid #bbb;margin-left:16px;display:flex;align-items:center;padding-left:11px;gap:11px;color:#333;font-size:15px}
.a{display:flex;margin-left:-1px}.a div{width:49px;height:40px;display:grid;place-items:center;position:relative}.a div:nth-child(3){margin-left:1px}.u:after{content:"";position:absolute;left:5px;right:4px;bottom:0;height:2px;background:linear-gradient(90deg,#76b9ed 31px,#4f7f9f 31px)}.u.f:after{background:#76b9ed}
.n{position:absolute;width:18px;height:17px;border-radius:9px;background:#30383d;border:1px solid #8b9296;font:600 11px/15px "Open Sans",sans-serif;text-align:center}
.d{font-size:12px;line-height:17px;display:flex;flex-direction:column;align-items:center;margin-left:12px;margin-top:-1px}`,
()=>ic('win',16,16,'margin-left:15px')+`<div class="s">${ic('tsearch',17)}${tx('Type here to search',128)}</div><div class="a">${[['cortana',16],['taskv',16],['edge',24],['expl',22,19],['msstore',23],['wmail',24,19],['chrome',24],['whats',24],['excel',22]].map((a,i)=>`<div class="${i==6?'u':i==8?'u f':''}">${ic(...a)}${i==7?'<span class="n" style="left:28px;top:19px">15</span>':''}</div>`).join('')}</div>`+ic('tup',12,8,'margin-left:302px')+ic('tsync',17,16,'margin-left:9.500px')+ic('bat',17,14,'margin-left:6.500px')+ic('wifi',14,14,'margin-left:10px')+ic('vol',17,14,'margin-left:7px')+`<div class="d">${tx('4:06 PM',42)}${tx('2/5/2025',46)}</div>`+ic('notif',16,16,'margin-left:21px')+`<span class="n" style="left:1330px;top:19px">15</span><div style="position:absolute;right:4px;top:0;width:1px;height:40px;background:#64707c"></div>`);

el('floating-tools',`:host{position:absolute;inset:0;pointer-events:none}div{position:absolute}
.sp{left:1315px;top:436px;width:50px;height:50px;background:#000;border-radius:9px 0 0 9px;padding:11px 0 0 12px}
.up{left:1279px;top:572px;width:46px;height:46px;border-radius:50%;background:#fff;box-shadow:0 1px 6px #0005;display:grid;place-items:center}
.w1{left:1315px;top:613px;width:60px;height:46px;border-radius:23px 0 0 23px;background:#fff;box-shadow:0 1px 6px #0005}
.w2{left:1325px;top:664px;width:50px;height:35px;border-radius:18px 0 0 18px;background:#fff;box-shadow:0 1px 5px #0002}
.g{left:1327px;width:30px;height:8px;border-radius:4px;background:#12a884}
.p{left:1329px;top:598px;width:26px;height:126px;background:#1b1b1b;border-radius:4px;display:flex;flex-direction:column;align-items:center;color:#fff}
.p>span{display:flex;align-items:center;justify-content:center}`,
()=>`<div class="sp">${ic('spark',26,27)}</div><div class="w2"></div><div class="w1"></div><div class="g" style="top:625px"></div><div class="g" style="top:636px"></div><div class="up" style="padding-bottom:3px">${ic('up',20,12)}</div><div class="p"><span style="height:17px;gap:3px">${ic('pen',9,10)}${ic('dots',8,3)}</span><span style="width:22px;height:22px;background:#424242">${ic('cam',20,16)}</span><span style="height:31px">${ic('video',20,13)}</span><span style="height:22px">${ic('shots',20,18)}</span><span style="height:34px">${ic('cog',19)}</span></div>`);

el('desktop-screen',':host{display:flex;flex-direction:column;width:1365px;height:768px;position:relative;overflow:hidden}.m{display:flex;height:439px}address-bar,bookmark-bar,crm-nav,tab-strip,record-header,crm-footer,task-bar{flex:none}',
'<tab-strip></tab-strip><address-bar></address-bar><bookmark-bar></bookmark-bar><crm-nav></crm-nav><record-header></record-header><div class="m"><related-list></related-list><crm-content></crm-content></div><crm-footer></crm-footer><task-bar></task-bar><floating-tools></floating-tools>');
</script>
</body>
</html>
